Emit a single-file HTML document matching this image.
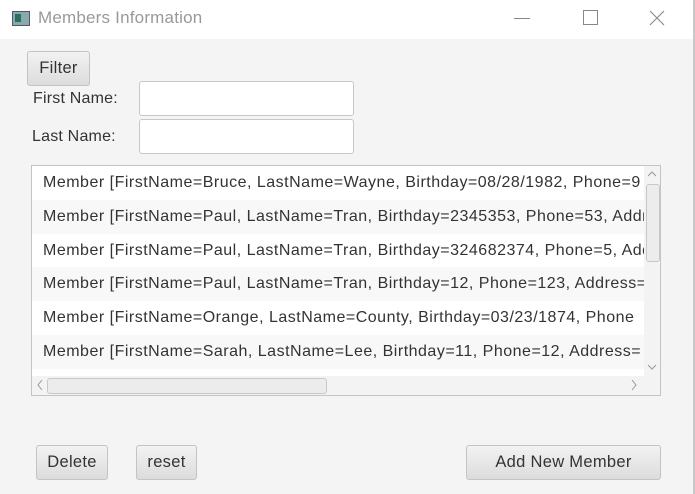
<!DOCTYPE html><html><head><style>
body{margin:0;width:695px;height:494px;overflow:hidden;background:#f4f4f4;font-family:"Liberation Sans",sans-serif;position:relative}
.a{position:absolute}
.title{left:0;top:0;width:693px;height:39px;background:#fff}
.btn{position:absolute;box-sizing:border-box;border:1px solid #c4c4c4;border-radius:3px;background:linear-gradient(#f2f2f2,#dcdcdc);font-size:16.5px;color:#333;text-align:center;line-height:33px;letter-spacing:0.3px}
.inp{position:absolute;box-sizing:border-box;background:#fff;border:1px solid #c8c8c8;border-radius:3px}
.lbl{position:absolute;font-size:16px;color:#333;letter-spacing:0.2px}
.row{position:absolute;left:0;width:612px;height:34px;font-size:16px;letter-spacing:0.5px;color:#333;line-height:34px;padding-left:11px;white-space:nowrap;overflow:hidden;box-sizing:border-box}
</style></head><body>
<div class="a title"></div>
<div class="a" style="left:693px;top:0;width:2px;height:494px;background:#c8c8c8"></div>
<div class="a" style="left:12px;top:11px;width:16px;height:13px;background:#8aa;border:1px solid #556"><div style="position:absolute;left:2px;top:2px;width:6px;height:8px;background:#2e6e5e"></div></div>
<div class="a" style="left:38px;top:8px;font-size:17px;color:#999;letter-spacing:0.2px">Members Information</div>
<div class="a" style="left:514px;top:18px;width:16px;height:1px;background:#888"></div>
<div class="a" style="left:583px;top:10px;width:13px;height:13px;border:1px solid #888"></div>
<svg class="a" style="left:649px;top:10px" width="16" height="16"><path d="M1 1L15 15M15 1L1 15" stroke="#888" stroke-width="1.1"/></svg>
<div class="btn" style="left:27px;top:51px;width:63px;height:35px">Filter</div>
<div class="lbl" style="left:33px;top:90px">First Name:</div>
<div class="lbl" style="left:32px;top:128px">Last Name:</div>
<div class="inp" style="left:139px;top:81px;width:215px;height:35px"></div>
<div class="inp" style="left:139px;top:119px;width:215px;height:35px"></div>
<div class="a" style="left:31px;top:165px;width:630px;height:231px;border:1px solid #c4c4c4;box-sizing:border-box;background:#fff;overflow:hidden">
<div class="row" style="top:0;background:#fff">Member [FirstName=Bruce, LastName=Wayne, Birthday=08/28/1982, Phone=9</div>
<div class="row" style="top:34px;background:#f8f8f8">Member [FirstName=Paul, LastName=Tran, Birthday=2345353, Phone=53, Address</div>
<div class="row" style="top:68px;background:#fff">Member [FirstName=Paul, LastName=Tran, Birthday=324682374, Phone=5, Address</div>
<div class="row" style="top:101px;background:#f8f8f8">Member [FirstName=Paul, LastName=Tran, Birthday=12, Phone=123, Address=</div>
<div class="row" style="top:135px;background:#fff">Member [FirstName=Orange, LastName=County, Birthday=03/23/1874, Phone</div>
<div class="row" style="top:169px;background:#f8f8f8">Member [FirstName=Sarah, LastName=Lee, Birthday=11, Phone=12, Address=</div>
<div class="a" style="left:612px;top:0;width:17px;height:212px;background:#f3f3f3"></div>
<div class="a" style="left:614px;top:18px;width:12px;height:76px;background:#ececec;border:1px solid #c8c8c8;border-radius:3px"></div>
<div class="a" style="left:0;top:210px;width:629px;height:20px;background:#f3f3f3"></div>
<div class="a" style="left:15px;top:212px;width:278px;height:14px;background:#ececec;border:1px solid #c8c8c8;border-radius:3px"></div>
<svg class="a" style="left:4px;top:213px" width="8" height="12"><path d="M6 1L2 6L6 11" stroke="#999" fill="none"/></svg>
<svg class="a" style="left:598px;top:213px" width="8" height="12"><path d="M2 1L6 6L2 11" stroke="#999" fill="none"/></svg>
<svg class="a" style="left:615px;top:4px" width="10" height="8"><path d="M1 6L5 2L9 6" stroke="#999" fill="none"/></svg>
<svg class="a" style="left:615px;top:197px" width="10" height="8"><path d="M1 2L5 6L9 2" stroke="#999" fill="none"/></svg>
</div>
<div class="btn" style="left:36px;top:445px;width:72px;height:35px">Delete</div>
<div class="btn" style="left:136px;top:445px;width:61px;height:35px">reset</div>
<div class="btn" style="left:466px;top:445px;width:195px;height:35px">Add New Member</div>
</body></html>
